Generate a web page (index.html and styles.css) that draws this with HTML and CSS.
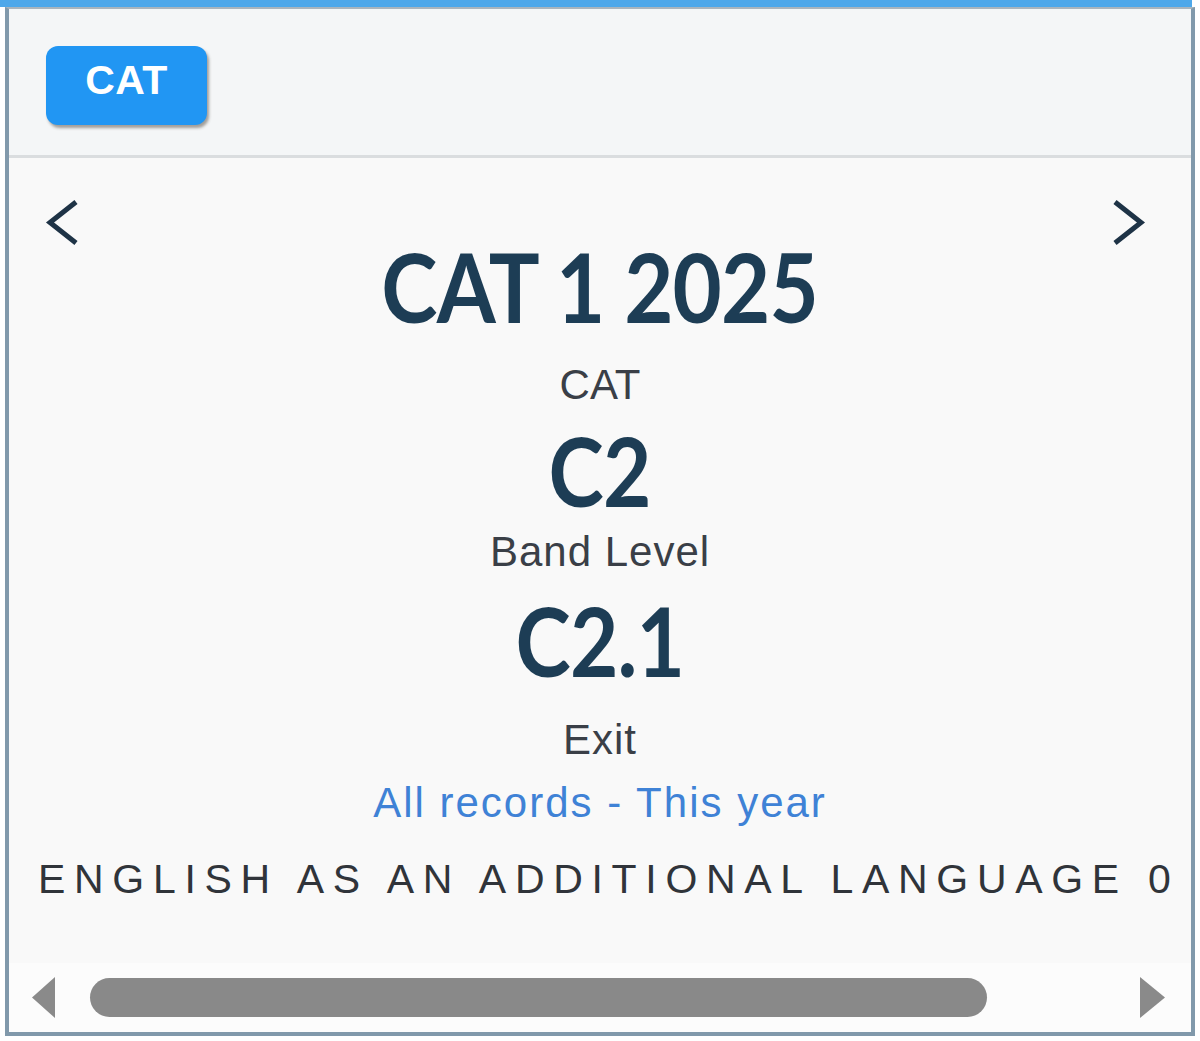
FILE: index.html
```html
<!DOCTYPE html>
<html lang="en">
<head>
<meta charset="utf-8">
<title>CAT</title>
<link rel="stylesheet" href="styles.css">
</head>
<body>
<div class="topbar"></div>
<div class="card">
  <header class="card-head">
    <span class="badge">CAT</span>
  </header>
  <div class="card-body">
    <div class="carousel">
      <button class="nav" aria-label="Previous">
        <svg width="40" height="50" viewBox="0 0 40 50"><path d="M38 4 L12 24.5 L38 45" fill="none" stroke="#1e3346" stroke-width="5"/></svg>
      </button>
      <div class="slide">
        <div class="title">CAT 1 2025</div>
        <div class="label label-cat">CAT</div>
        <div class="value value-band">C2</div>
        <div class="label label-band">Band Level</div>
        <div class="value value-sub">C2.1</div>
        <div class="label label-exit">Exit</div>
        <a class="scope">All records - This year</a>
      </div>
      <button class="nav" aria-label="Next">
        <svg width="40" height="50" viewBox="0 0 40 50"><path d="M3 4 L29 24.5 L3 45" fill="none" stroke="#1e3346" stroke-width="5"/></svg>
      </button>
    </div>
    <div class="subject">ENGLISH AS AN ADDITIONAL LANGUAGE 0</div>
    <div class="scrollbar">
      <svg class="arrow" width="23" height="41" viewBox="0 0 23 41"><polygon points="23,0 0,20.5 23,41" fill="#8a8a8a"/></svg>
      <div class="thumb"></div>
      <svg class="arrow arrow-right" width="25" height="41" viewBox="0 0 25 41"><polygon points="0,0 25,20.5 0,41" fill="#8a8a8a"/></svg>
    </div>
  </div>
</div>
</body>
</html>
```

FILE: styles.css
```css
* { box-sizing: border-box; }

html, body {
  margin: 0;
  padding: 0;
  background: #ffffff;
}

body {
  width: 1200px;
  height: 1041px;
  overflow: hidden;
  font-family: "Liberation Sans", Arial, sans-serif;
}

.topbar {
  width: 1192px;
  height: 7px;
  background: #4ea8ea;
}

.card {
  margin-left: 5px;
  width: 1190px;
  border: 4px solid #8199ab;
  border-top: 2px solid #aab5bd;
  display: flex;
  flex-direction: column;
}

.card-head {
  height: 149px;
  padding: 37px 0 0 37px;
  background: #f4f6f7;
  border-bottom: 3px solid #dadddf;
  display: flex;
  align-items: flex-start;
}

.badge {
  width: 161px;
  height: 79px;
  padding-bottom: 10px;
  border-radius: 12px;
  background: #2196f3;
  box-shadow: 2px 3px 3px rgba(60, 50, 40, 0.45);
  color: #ffffff;
  font-weight: bold;
  font-size: 41px;
  line-height: 69px;
  text-align: center;
  letter-spacing: 0.5px;
}

.card-body {
  height: 874px;
  background: #f9f9f9;
  display: flex;
  flex-direction: column;
}

.carousel {
  display: flex;
  align-items: flex-start;
  padding: 40px 39px 0 29px;
}

.nav {
  flex: none;
  width: 40px;
  height: 50px;
  padding: 0;
  margin: 0;
  border: 0;
  background: transparent;
  display: block;
}

.nav svg { display: block; }

.slide {
  flex: 1;
  padding-left: 10px;
  display: flex;
  flex-direction: column;
  align-items: center;
  text-align: center;
}

.title, .value {
  font-family: Lato, "Open Sans", sans-serif;
  font-weight: 700;
  font-size: 96px;
  line-height: 94px;
  letter-spacing: -1px;
  color: #1d3d55;
  white-space: nowrap;
  transform: scaleX(0.87);
}

.title {
  margin-top: 41px;
  transform: scaleX(0.885);
}

.label {
  font-size: 42px;
  line-height: 42px;
  color: #3a3f47;
  letter-spacing: 1px;
}

.label-cat { margin-top: 31px; letter-spacing: 0; }
.value-band { margin-top: 17px; }
.label-band { margin-top: 14px; }
.value-sub { margin-top: 20px; }
.label-exit { margin-top: 32px; }

.scope {
  margin-top: 21px;
  font-size: 42px;
  line-height: 42px;
  letter-spacing: 2px;
  color: #3f82d6;
  white-space: nowrap;
}

.subject {
  margin-top: 35px;
  padding-left: 29px;
  font-size: 41px;
  line-height: 41px;
  letter-spacing: 8.7px;
  color: #30343a;
  white-space: nowrap;
}

.scrollbar {
  margin-top: auto;
  height: 69px;
  background: #fcfcfc;
  display: flex;
  align-items: center;
  padding: 0 26px 0 23px;
}

.arrow { display: block; flex: none; }
.arrow-right { margin-left: auto; }

.thumb {
  margin-left: 35px;
  width: 897px;
  height: 39px;
  border-radius: 20px;
  background: #898989;
}
```
